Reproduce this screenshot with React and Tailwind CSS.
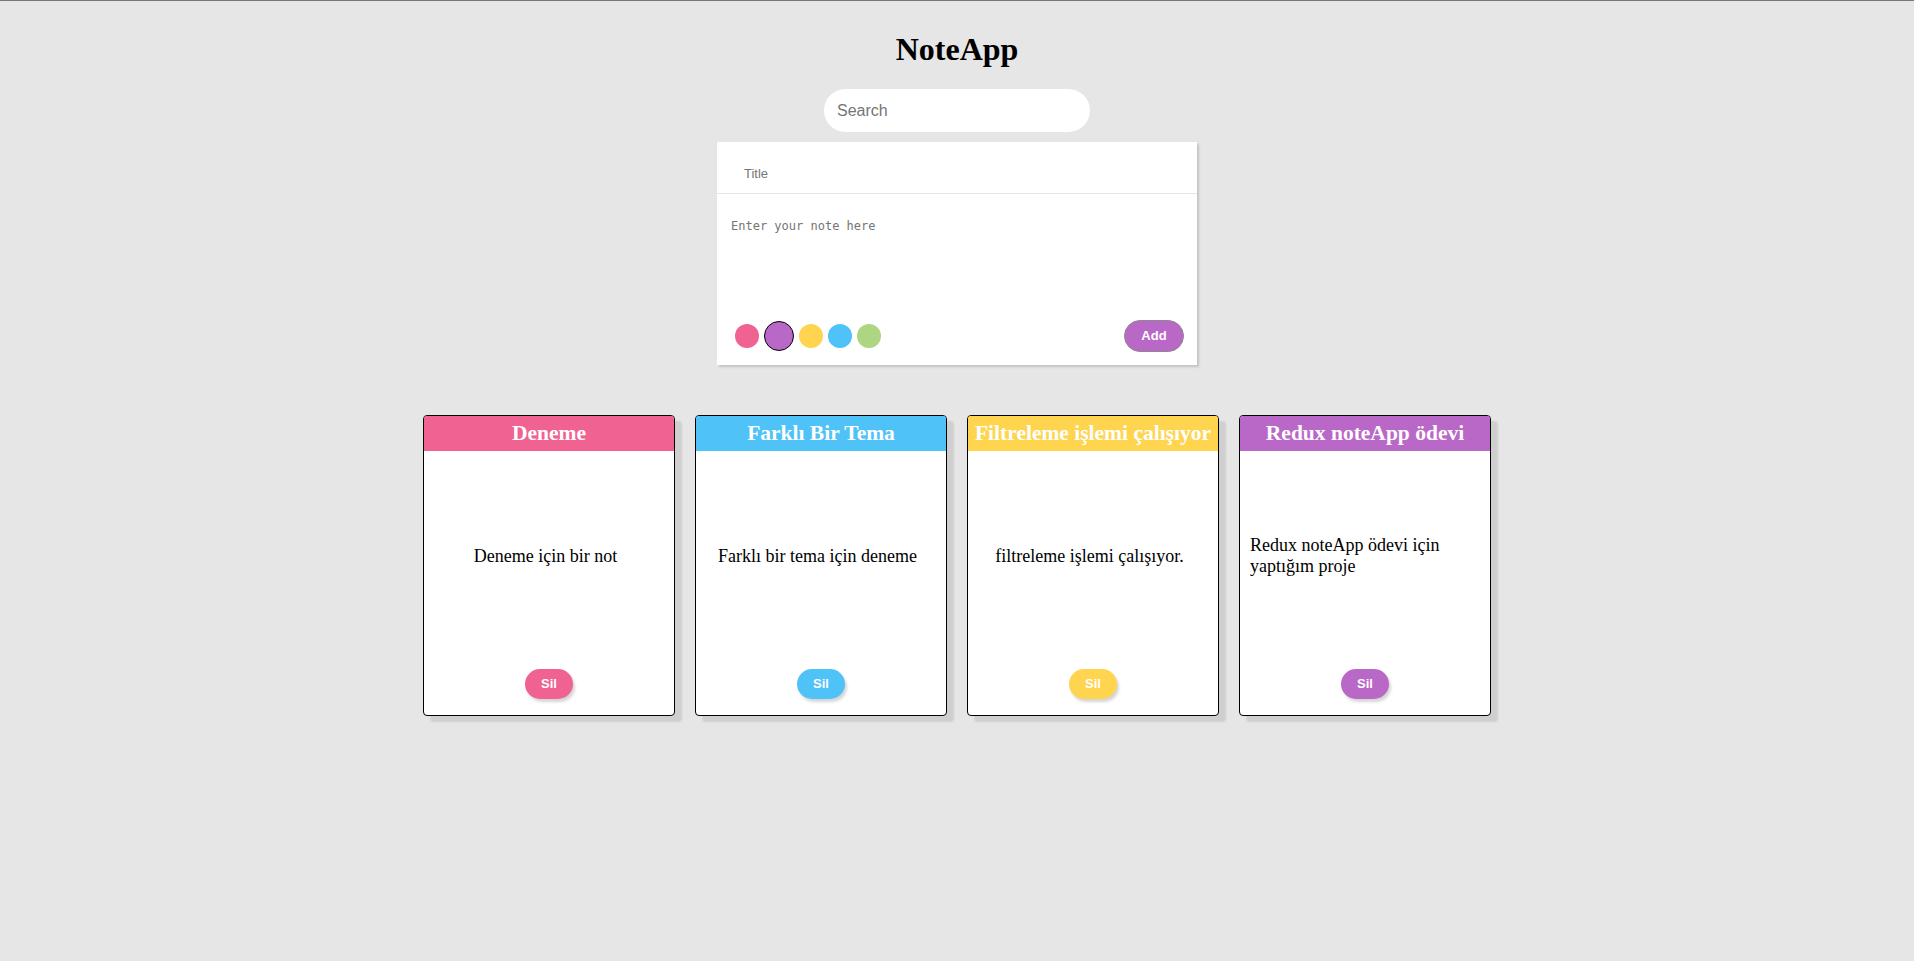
import React from "react";

const notes = [
  { title: "Deneme", body: "Deneme için bir not", color: "bg-[#f06292]" },
  { title: "Farklı Bir Tema", body: "Farklı bir tema için deneme", color: "bg-[#4fc3f7]" },
  { title: "Filtreleme işlemi çalışıyor", body: "filtreleme işlemi çalışıyor.", color: "bg-[#ffd54f]" },
  { title: "Redux noteApp ödevi", body: "Redux noteApp ödevi için yaptığım proje", color: "bg-[#ba68c8]" },
];

export default function App() {
  return (
    <div
      className="min-h-screen bg-[#e6e6e6] border-t border-[#7a7478] flex flex-col items-center"
      style={{ fontFamily: '"Liberation Serif", "Times New Roman", serif' }}
    >
      <h1 className="mt-[30px] text-[32px] leading-[36px] font-bold text-black">NoteApp</h1>
      <input
        type="text"
        placeholder="Search"
        className="mt-[22px] h-[43px] w-[266px] rounded-full bg-white px-[13px] text-[16px] outline-none placeholder:text-[#757575]"
        style={{ fontFamily: '"Liberation Sans", Arial, sans-serif' }}
      />
      <div className="mt-[10px] w-[480px] h-[223px] bg-white shadow-[2px_2px_2px_#c4c4c4] flex flex-col">
        <input
          type="text"
          placeholder="Title"
          className="h-[52px] shrink-0 border-b border-[#e5e5e5] pl-[27px] pt-[11px] text-[13px] outline-none placeholder:text-[#757575]"
          style={{ fontFamily: '"Liberation Sans", Arial, sans-serif' }}
        />
        <textarea
          placeholder="Enter your note here"
          className="flex-1 resize-none pt-[24px] px-[14px] text-[12px] leading-[16px] outline-none placeholder:text-[#757575]"
          style={{ fontFamily: '"DejaVu Sans Mono", "Liberation Mono", monospace' }}
        />
        <div className="h-[32px] mb-[13px] flex items-center justify-between pl-[18px] pr-[13px] shrink-0">
          <div className="flex items-center gap-[5px]">
            <span className="w-[24px] h-[24px] rounded-full bg-[#f06292]" />
            <span className="w-[30px] h-[30px] rounded-full bg-[#ba68c8] border-[1.5px] border-black" />
            <span className="w-[24px] h-[24px] rounded-full bg-[#ffd54f]" />
            <span className="w-[24px] h-[24px] rounded-full bg-[#4fc3f7]" />
            <span className="w-[24px] h-[24px] rounded-full bg-[#aed581]" />
          </div>
          <button
            className="w-[60px] h-[32px] rounded-full bg-[#ba68c8] border border-[#8a8a8a] text-white font-bold text-[13px]"
            style={{ fontFamily: '"Liberation Sans", Arial, sans-serif' }}
          >
            Add
          </button>
        </div>
      </div>
      <div className="mt-[50px] flex gap-[20px]">
        {notes.map((n) => (
          <div
            key={n.title}
            className="w-[252px] h-[301px] bg-white border border-black rounded-[4px] overflow-hidden flex flex-col shadow-[7px_6px_2px_#cfcfcf]"
          >
            <div
              className={`${n.color} h-[35px] shrink-0 flex items-center justify-center text-white font-bold text-[21.5px] leading-[1.15] whitespace-nowrap`}
            >
              {n.title}
            </div>
            <div className="flex-1 flex items-center justify-center pl-[10px] pr-[17px] pb-[8px]">
              <p className="text-[18px] leading-[1.15] text-black">{n.body}</p>
            </div>
            <div className="flex justify-center pb-[16px] shrink-0">
              <button
                className={`${n.color} w-[48px] h-[30px] rounded-full text-white font-bold text-[13px] shadow-[2px_3px_3px_#d6d6d6]`}
                style={{ fontFamily: '"Liberation Sans", Arial, sans-serif' }}
              >
                Sil
              </button>
            </div>
          </div>
        ))}
      </div>
    </div>
  );
}
